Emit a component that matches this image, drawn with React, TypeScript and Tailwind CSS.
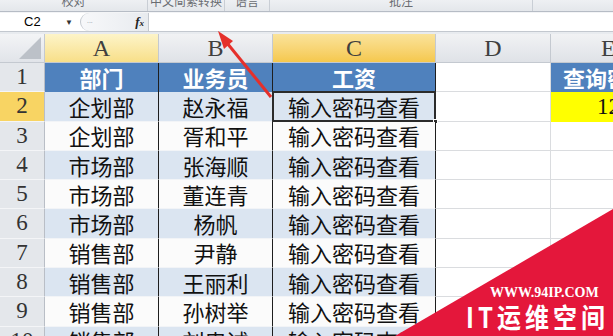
import React from "react";

const rows = [
  { dept: "企划部", name: "赵永福" },
  { dept: "企划部", name: "胥和平" },
  { dept: "市场部", name: "张海顺" },
  { dept: "市场部", name: "董连青" },
  { dept: "市场部", name: "杨帆" },
  { dept: "销售部", name: "尹静" },
  { dept: "销售部", name: "王丽利" },
  { dept: "销售部", name: "孙树举" },
  { dept: "销售部", name: "刘忠诚" },
];

const cjk = { fontFamily: '"Noto Sans CJK SC", sans-serif' };
const serif = { fontFamily: '"Liberation Serif", serif' };

const RibbonStrip = () => (
  <div className="flex h-[11px] bg-gradient-to-b from-[#eef0f3] to-[#e4e7eb] text-[12px] leading-none text-[#6a6d72]" style={cjk}>
    <div className="w-[148px] shrink-0 border-r border-[#c9ced5] text-center">
      <div className="-mt-[5px]">校对</div>
    </div>
    <div className="w-[77px] shrink-0 border-r border-[#c9ced5] text-center">
      <div className="-mt-[5px]">中文简繁转换</div>
    </div>
    <div className="w-[45px] shrink-0 border-r border-[#c9ced5] text-center">
      <div className="-mt-[5px]">语言</div>
    </div>
    <div className="w-[263px] shrink-0 border-r border-[#c9ced5] text-center">
      <div className="-mt-[5px]">批注</div>
    </div>
    <div className="flex-1" />
  </div>
);

const FormulaBar = () => (
  <div className="flex h-[18px] bg-white">
    <div className="flex w-[80px] shrink-0 items-center">
      <span className="ml-[24px] text-[13px] text-black" style={{ fontFamily: '"Liberation Sans", sans-serif' }}>
        C2
      </span>
      <span className="ml-auto mr-[7px] text-[8px] text-[#333]">▼</span>
    </div>
    <div className="flex w-[68px] shrink-0 items-center rounded-l-full border-l border-[#c3c8cf] bg-gradient-to-r from-[#f7f8fa] to-[#e8ebef]">
      <span className="ml-[6px] text-[7px] leading-none text-[#b0b5bc]">···</span>
      <span className="ml-auto mr-[4px] text-[13px] font-bold italic text-[#222]" style={serif}>
        f<span className="text-[9px]">x</span>
      </span>
    </div>
    <div className="min-w-0 flex-1 border-l border-[#c3c8cf]" />
  </div>
);

const ColumnHeaders = () => {
  const letter = "flex shrink-0 items-center justify-center border-r border-[#c4c9d0] text-[24px] text-[#3f3f3f]";
  return (
    <div className="flex h-[29px] border-b border-[#c4c9d0]" style={serif}>
      <div className="relative w-[45px] shrink-0 border-r border-[#c4c9d0] bg-gradient-to-b from-[#f3f4f6] to-[#e1e4e9]">
        <div className="absolute bottom-[3px] right-[3px] h-0 w-0 border-b-[22px] border-l-[22px] border-b-[#bcc1c8] border-l-transparent" />
      </div>
      <div className={`w-[114px] bg-gradient-to-b from-[#fdf4c8] to-[#f8df88] ${letter}`}>A</div>
      <div className={`w-[114px] bg-gradient-to-b from-[#f1f2f4] to-[#dfe2e7] ${letter}`}>B</div>
      <div className={`w-[163px] bg-gradient-to-b from-[#fae39a] to-[#f5c84c] ${letter}`}>C</div>
      <div className={`w-[115px] bg-gradient-to-b from-[#f1f2f4] to-[#dfe2e7] ${letter}`}>D</div>
      <div className="flex min-w-0 flex-1 items-center bg-gradient-to-b from-[#f1f2f4] to-[#dfe2e7] pl-[50px] text-[24px] text-[#3f3f3f]">
        E
      </div>
    </div>
  );
};

const RowHeader = ({ n, active }: { n: number; active?: boolean }) => (
  <div
    className={`flex w-[45px] shrink-0 items-center justify-center border-b border-r border-b-[#f4f5f7] border-r-[#b9bec6] text-[23px] text-[#333] ${
      active ? "bg-[#f8d463]" : "bg-[#e4e7eb]"
    }`}
    style={serif}
  >
    {n}
  </div>
);

const App = () => {
  const headCell =
    "flex shrink-0 items-center justify-center border-r border-[#1e1e1e] bg-[#4f81bd] text-[22px] font-bold text-white";

  return (
    <div className="relative h-[336px] w-[613px] overflow-hidden bg-white">
      <RibbonStrip />
      <div className="h-px bg-[#b6bcc5]" />
      <div className="h-px bg-[#f3f4f6]" />
      <FormulaBar />
      <div className="h-[3px] border-t border-[#c3c8cf] bg-[#e8ebef]" />
      <ColumnHeaders />

      {/* row 1: table header */}
      <div className="flex h-[29.3px]">
        <RowHeader n={1} />
        <div className={`w-[114px] ${headCell}`} style={cjk}>
          部门
        </div>
        <div className={`w-[114px] ${headCell}`} style={cjk}>
          业务员
        </div>
        <div className={`w-[163px] ${headCell}`} style={cjk}>
          工资
        </div>
        <div className="w-[115px] shrink-0 border-b border-r border-[#dadcdf] bg-white" />
        <div className="flex min-w-0 flex-1 items-center overflow-hidden whitespace-nowrap bg-[#4f81bd] pl-[12px] text-[22px] font-bold text-white" style={cjk}>
          查询密码
        </div>
      </div>

      {rows.map((r, i) => {
        const n = i + 2;
        const bg = n % 2 === 0 ? "bg-[#dbe5f1]" : "bg-[#fbfbfb]";
        const cell = `flex shrink-0 items-center justify-center border-b border-r border-b-[#f2f4f7] border-r-[#1e1e1e] text-[22px] text-[#111] ${bg}`;
        return (
          <div key={n} className="flex h-[29.3px]">
            <RowHeader n={n} active={n === 2} />
            <div className={`w-[114px] ${cell}`} style={cjk}>
              {r.dept}
            </div>
            <div className={`w-[114px] ${cell}`} style={cjk}>
              {r.name}
            </div>
            <div className={`relative w-[163px] ${cell}`} style={cjk}>
              {n === 2 && (
                <>
                  <div className="absolute -left-px -top-px bottom-[-1px] right-[-1px] border-2 border-[#2b2b2b]" />
                  <div className="absolute -bottom-[3px] -right-[3px] h-[5px] w-[5px] border border-white bg-[#2b2b2b]" />
                </>
              )}
              输入密码查看
            </div>
            <div className="w-[115px] shrink-0 border-b border-r border-[#dadcdf] bg-white" />
            {n === 2 ? (
              <div className="flex min-w-0 flex-1 items-center overflow-hidden whitespace-nowrap bg-[#ffff00] pl-[46px] text-[23px] text-[#111]" style={serif}>
                123456
              </div>
            ) : (
              <div className="min-w-0 flex-1 border-b border-[#dadcdf] bg-white" />
            )}
          </div>
        );
      })}

      {/* red arrow pointing at the formula bar */}
      <svg className="pointer-events-none absolute left-0 top-0" width="613" height="336" viewBox="0 0 613 336">
        <line x1="227" y1="43" x2="271" y2="97" stroke="#e5302b" strokeWidth="3" />
        <polygon points="218,31 233,41 224,49" fill="#e5302b" />
        <polygon points="395,336 613,209 613,336" fill="#e4173b" />
      </svg>

      {/* watermark */}
      <div
        className="absolute left-[490px] top-[286px] text-[14px] font-bold leading-none text-white"
        style={serif}
      >
        WWW.94IP.COM
      </div>
      <div
        className="absolute left-[466px] top-[303px] origin-top scale-y-[1.15] whitespace-nowrap text-[24px] font-bold leading-none tracking-[4px] text-white"
        style={cjk}
      >
        IT运维空间
      </div>
    </div>
  );
};

export default App;
